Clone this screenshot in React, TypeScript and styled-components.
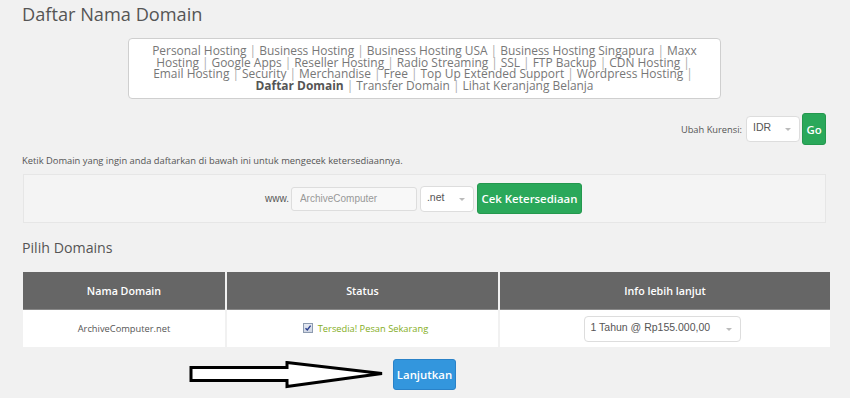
import React from 'react';
import styled, { createGlobalStyle } from 'styled-components';

const GlobalStyle = createGlobalStyle`
  body {
    margin: 0;
    background: #f1f1f1;
    font-family: 'Open Sans', sans-serif;
    color: #555;
  }
`;

const Page = styled.div`
  width: 803px;
  margin-left: 23px;
  padding-top: 1px;
`;

const Title = styled.h1`
  margin: 0;
  height: 28px;
  font-size: 18.2px;
  font-weight: 400;
  line-height: 26px;
  color: #555;
  margin-left: -1px;
`;

const MenuBox = styled.div`
  width: 593px;
  height: 61px;
  margin: 9px 0 0 105px;
  box-sizing: border-box;
  background: #fff;
  border: 1px solid #cfcfcf;
  border-radius: 4px;
  padding: 6px 0 0;
  text-align: center;
`;

const MenuLine = styled.div`
  font-size: 11.95px;
  line-height: 11.7px;
  height: 11.7px;
  color: #777;
  white-space: nowrap;
`;

const MenuLink = styled.span<{ active?: boolean }>`
  color: ${({ active }) => (active ? '#555' : '#777')};
  font-weight: ${({ active }) => (active ? 700 : 400)};
`;

const Sep = styled.span`
  color: #aaa;
  margin: 0 3px;
`;

const CurrencyRow = styled.div`
  display: flex;
  justify-content: flex-end;
  align-items: center;
  gap: 2px;
  margin-top: 14px;
  height: 32px;
`;

const Label = styled.span`
  font-size: 9.3px;
  color: #555;
  margin-right: 2px;
`;

const SelectBox = styled.div<{ w: number; h: number }>`
  box-sizing: border-box;
  width: ${({ w }) => w}px;
  height: ${({ h }) => h}px;
  background: #fff;
  border: 1px solid #ddd;
  border-radius: 4px;
  display: flex;
  align-items: flex-start;
  justify-content: space-between;
  padding: 4px 8px 0 6px;
  font-family: 'Liberation Sans', Arial, sans-serif;
  font-size: 10.5px;
  color: #555;
`;

const Caret = styled.span`
  width: 0;
  height: 0;
  margin-top: 7px;
  border-left: 3px solid transparent;
  border-right: 3px solid transparent;
  border-top: 3px solid #bbb;
`;

const Button = styled.button<{ variant: 'green' | 'blue'; w: number; h: number }>`
  box-sizing: border-box;
  width: ${({ w }) => w}px;
  height: ${({ h }) => h}px;
  padding: 0;
  border: 1px solid ${({ variant }) => (variant === 'green' ? '#24984e' : '#2a82c8')};
  border-radius: 3px;
  background: ${({ variant }) => (variant === 'green' ? '#2aa85a' : '#3396dd')};
  color: #fff;
  font-family: 'Open Sans', sans-serif;
  font-weight: 600;
  font-size: 11.4px;
  cursor: pointer;
`;

const Hint = styled.p`
  margin: 9px 0 0 -1px;
  font-size: 9.35px;
  line-height: 14px;
  color: #555;
`;

const Well = styled.div`
  box-sizing: border-box;
  height: 49px;
  margin-top: 6px;
  border: 1px solid #e6e6e6;
  background: #f4f4f4;
  display: flex;
  justify-content: center;
  align-items: center;
  gap: 3px;
  padding-right: 2px;
`;

const Prefix = styled.span`
  font-family: 'Liberation Sans', Arial, sans-serif;
  font-size: 10px;
  color: #555;
  margin-right: -1px;
`;

const DomainInput = styled.input`
  box-sizing: border-box;
  width: 126px;
  height: 24px;
  border: 1px solid #ddd;
  border-radius: 3px;
  background: #f8f8f8;
  padding: 0 8px;
  font-family: 'Liberation Sans', Arial, sans-serif;
  font-size: 10px;
  color: #999;
  &::placeholder {
    color: #999;
  }
`;

const SubTitle = styled.h2`
  margin: 15px 0 0 -1px;
  font-size: 14.2px;
  font-weight: 400;
  line-height: 20px;
  color: #555;
`;

const Table = styled.table`
  width: 803px;
  margin-top: 14px;
  border-collapse: collapse;
  table-layout: fixed;
`;

const Th = styled.th<{ w: number }>`
  width: ${({ w }) => w}px;
  height: 37px;
  padding: 0;
  background: #666;
  border-left: 2px solid #f1f1f1;
  border-bottom: 1px solid #888;
  color: #fff;
  font-size: 10.7px;
  font-weight: 600;
  &:first-child {
    border-left: none;
  }
`;

const Td = styled.td`
  height: 37px;
  padding: 0;
  background: #fff;
  border-left: 2px solid #f1f1f1;
  text-align: center;
  font-size: 9.3px;
  color: #555;
  &:first-child {
    border-left: none;
  }
`;

const Status = styled.span`
  display: inline-flex;
  align-items: center;
  gap: 5px;
  color: #84ad1c;
  font-size: 9.3px;
  margin-left: 6px;
`;

const Check = styled.span`
  box-sizing: border-box;
  width: 10px;
  height: 10px;
  border: 1px solid #8d9bb0;
  background: linear-gradient(#e6eaf2, #cfd6e3);
  display: inline-flex;
  align-items: center;
  justify-content: center;
`;

const PriceCell = styled.div`
  display: flex;
  justify-content: center;
  padding-right: 6px;
`;

const Footer = styled.div`
  position: relative;
  display: flex;
  justify-content: center;
  margin-top: 12px;
`;

const Arrow = styled.svg`
  position: absolute;
  left: 166px;
  top: 2px;
`;

const menuLines: { text: string; active?: boolean }[][] = [
  [
    { text: 'Personal Hosting' },
    { text: 'Business Hosting' },
    { text: 'Business Hosting USA' },
    { text: 'Business Hosting Singapura' },
    { text: 'Maxx' },
  ],
  [
    { text: 'Hosting' },
    { text: 'Google Apps' },
    { text: 'Reseller Hosting' },
    { text: 'Radio Streaming' },
    { text: 'SSL' },
    { text: 'FTP Backup' },
    { text: 'CDN Hosting' },
    { text: '' },
  ],
  [
    { text: 'Email Hosting' },
    { text: 'Security' },
    { text: 'Merchandise' },
    { text: 'Free' },
    { text: 'Top Up Extended Support' },
    { text: 'Wordpress Hosting' },
    { text: '' },
  ],
  [
    { text: 'Daftar Domain', active: true },
    { text: 'Transfer Domain' },
    { text: 'Lihat Keranjang Belanja' },
  ],
];

const App: React.FC = () => {
  return (
    <>
      <GlobalStyle />
      <Page>
        <Title>Daftar Nama Domain</Title>

        <MenuBox>
          {menuLines.map((line, i) => (
            <MenuLine key={i}>
              {line.map((item, j) => (
                <React.Fragment key={j}>
                  {j > 0 && <Sep>|</Sep>}
                  {item.text && <MenuLink active={item.active}>{item.text}</MenuLink>}
                </React.Fragment>
              ))}
            </MenuLine>
          ))}
        </MenuBox>

        <CurrencyRow>
          <Label>Ubah Kurensi:</Label>
          <SelectBox w={54} h={26}>
            IDR
            <Caret />
          </SelectBox>
          <Button variant='green' w={24} h={32}>
            Go
          </Button>
        </CurrencyRow>

        <Hint>Ketik Domain yang ingin anda daftarkan di bawah ini untuk mengecek ketersediaannya.</Hint>

        <Well>
          <Prefix>www.</Prefix>
          <DomainInput placeholder='ArchiveComputer' />
          <SelectBox w={54} h={26}>
            .net
            <Caret />
          </SelectBox>
          <Button variant='green' w={105} h={31}>
            Cek Ketersediaan
          </Button>
        </Well>

        <SubTitle>Pilih Domains</SubTitle>

        <Table>
          <thead>
            <tr>
              <Th w={202}>Nama Domain</Th>
              <Th w={271}>Status</Th>
              <Th w={330}>Info lebih lanjut</Th>
            </tr>
          </thead>
          <tbody>
            <tr>
              <Td>ArchiveComputer.net</Td>
              <Td>
                <Status>
                  <Check>
                    <svg width='8' height='8' viewBox='0 0 8 8'>
                      <path d='M1.5 4.2 L3.3 6 L6.6 1.6' fill='none' stroke='#2a3f8f' strokeWidth='1.4' />
                    </svg>
                  </Check>
                  Tersedia! Pesan Sekarang
                </Status>
              </Td>
              <Td>
                <PriceCell>
                  <SelectBox w={157} h={26}>
                    1 Tahun @ Rp155.000,00
                    <Caret />
                  </SelectBox>
                </PriceCell>
              </Td>
            </tr>
          </tbody>
        </Table>

        <Footer>
          <Arrow width='196' height='28' viewBox='0 0 196 28'>
            <path
              d='M2 6.5 L98 6.5 L98 1.5 L193 12.5 L98 25.5 L98 19.5 L2 19.5 Z'
              fill='#fff'
              stroke='#000'
              strokeWidth='3'
              strokeLinejoin='miter'
            />
          </Arrow>
          <Button variant='blue' w={63} h={31}>
            Lanjutkan
          </Button>
        </Footer>
      </Page>
    </>
  );
};

export default App;
